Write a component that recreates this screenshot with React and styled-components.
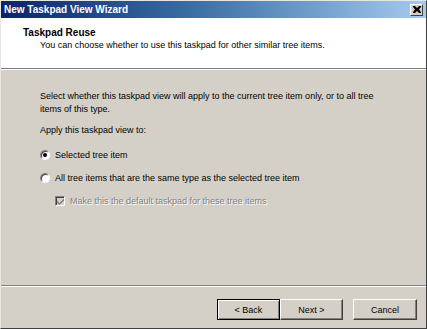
import React from 'react'
import styled, {createGlobalStyle} from 'styled-components'

const GlobalStyle = createGlobalStyle`
html, body {
margin: 0;
padding: 0;
background: #d4d0c8;
overflow: hidden;
}
`
const Window = styled.div`
width: 427px;
height: 329px;
box-sizing: border-box;
display: flex;
flex-direction: column;
background-color: #d4d0c8;
border: 1px solid;
border-color: #e8e6e0 #404040 #404040 #e8e6e0;
font-family: "Liberation Sans", Arial, sans-serif;
font-size: 9px;
color: #000;
`
const TitleBar = styled.div`
height: 17px;
display: flex;
align-items: center;
justify-content: space-between;
padding: 0 3px 0 3px;
background: linear-gradient(to right, #0a246a 0%, #3a6ea5 45%, #a6caf0 100%);
`
const Title = styled.div`
color: white;
font-weight: bold;
font-size: 10px;
`
const CloseBtn = styled.div`
width: 13px;
height: 12px;
box-sizing: border-box;
display: flex;
align-items: center;
justify-content: center;
background-color: #d4d0c8;
border: 1px solid;
border-color: #fff #404040 #404040 #fff;
`
const Header = styled.div`
height: 50px;
box-sizing: border-box;
background-color: white;
padding: 9px 0 0 22px;
`
const HeaderTitle = styled.div`
font-weight: bold;
font-size: 10px;
line-height: 12px;
`
const HeaderText = styled.div`
line-height: 12px;
padding-left: 17px;
`
const Separator = styled.div`
height: 0;
border-top: 1px solid #808080;
border-bottom: 1px solid #fff;
`
const Body = styled.div`
flex: 1;
display: flex;
flex-direction: column;
padding: 20px 0 0 39px;
`
const Para = styled.div`
line-height: 13px;
margin-bottom: ${p => p.gap || 0}px;
`
const Option = styled.label`
display: flex;
align-items: center;
height: 14px;
margin-bottom: 9px;
padding-left: ${p => p.indent || 0}px;
color: ${p => p.disabled ? '#808080' : '#000'};
text-shadow: ${p => p.disabled ? '1px 1px 0 #fff' : 'none'};
`
const Radio = styled.span`
width: 10px;
height: 10px;
box-sizing: border-box;
border-radius: 50%;
background-color: white;
border: 1px solid;
border-color: #808080 #fff #fff #808080;
box-shadow: inset 1px 1px 0 #404040;
display: flex;
align-items: center;
justify-content: center;
margin: 0 5px 0 0;
&::after {
content: '';
width: 4px;
height: 4px;
border-radius: 50%;
background-color: ${p => p.checked ? '#000' : 'transparent'};
}
`
const CheckBox = styled.span`
width: 10px;
height: 10px;
box-sizing: border-box;
background-color: #d4d0c8;
border: 1px solid;
border-color: #808080 #fff #fff #808080;
box-shadow: inset 1px 1px 0 #404040;
display: flex;
align-items: center;
justify-content: center;
margin-right: 5px;
`
const Footer = styled.div`
height: 41px;
box-sizing: border-box;
display: flex;
justify-content: flex-end;
align-items: flex-start;
padding: 12px 9px 0 0;
`
const Button = styled.div`
width: ${p => p.w || 63}px;
height: 21px;
box-sizing: border-box;
display: flex;
align-items: center;
justify-content: center;
margin-left: ${p => p.gap || 0}px;
background-color: #d4d0c8;
border: 1px solid;
border-color: ${p => p.def ? '#000' : '#fff #404040 #404040 #fff'};
box-shadow: ${p => p.def ? 'inset 1px 1px 0 #fff, inset -1px -1px 0 #808080' : 'inset -1px -1px 0 #808080'};
`

export default function App(){
    return(
        <Window>
            <GlobalStyle />
            <TitleBar>
                <Title>New Taskpad View Wizard</Title>
                <CloseBtn>
                    <svg width="8" height="7" viewBox="0 0 8 7">
                        <path d="M0 0h2l2 2 2-2h2v1l-2 2.5 2 2.5v1h-2l-2-2-2 2h-2v-1l2-2.5-2-2.5z" fill="#000"/>
                    </svg>
                </CloseBtn>
            </TitleBar>
            <Header>
                <HeaderTitle>Taskpad Reuse</HeaderTitle>
                <HeaderText>You can choose whether to use this taskpad for other similar tree items.</HeaderText>
            </Header>
            <Separator />
            <Body>
                <Para gap={8}>
                    Select whether this taskpad view will apply to the current tree item only, or to all tree<br/>
                    items of this type.
                </Para>
                <Para gap={11}>Apply this taskpad view to:</Para>
                <Option><Radio checked />Selected tree item</Option>
                <Option><Radio />All tree items that are the same type as the selected tree item</Option>
                <Option indent={15} disabled>
                    <CheckBox>
                        <svg width="7" height="7" viewBox="0 0 7 7">
                            <path d="M0 2.5l2.5 2.5 4.5-4.5v2l-4.5 4.5-2.5-2.5z" fill="#808080"/>
                        </svg>
                    </CheckBox>
                    Make this the default taskpad for these tree items
                </Option>
            </Body>
            <Separator />
            <Footer>
                <Button def>&lt; Back</Button>
                <Button>Next &gt;</Button>
                <Button gap={10} w={64}>Cancel</Button>
            </Footer>
        </Window>
    )
}
